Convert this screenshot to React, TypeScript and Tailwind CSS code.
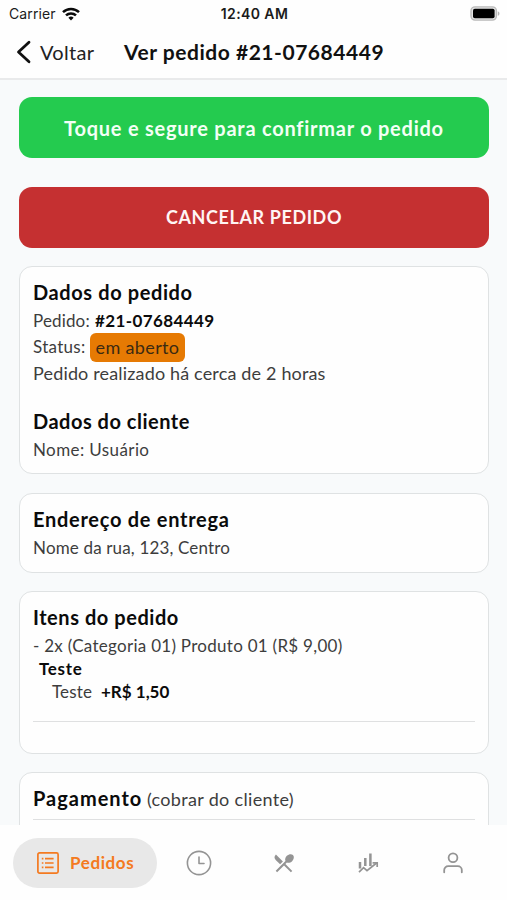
import type { ReactNode } from "react";
import { MdRestaurantMenu } from "react-icons/md";

function Card({ className = "", children }: { className?: string; children: ReactNode }) {
  return (
    <section className={`shrink-0 rounded-[13px] border border-[#dfe2e3] bg-[#fefefe] px-[13px] pt-[10px] ${className}`}>
      {children}
    </section>
  );
}

function Heading({ className = "", children }: { className?: string; children: ReactNode }) {
  return <h2 className={`h-[31px] text-[20px] leading-[30px] font-bold text-[#0b0b0b] ${className}`}>{children}</h2>;
}

function StatusBar() {
  return (
    <div className="grid h-[27px] grid-cols-3 items-center pr-[7px] pl-[9px] font-['Inter',sans-serif] text-[14px] text-[#1b1b1b]">
      <div className="flex items-center gap-[6px]">
        <span className="tracking-[0.1px]">Carrier</span>
        <svg width="18" height="14" viewBox="0 0 18 14" fill="none" stroke="#0a0a0a" strokeWidth="2.5">
          <path d="M1 5.2a11.4 11.4 0 0 1 16 0" />
          <path d="M4 8.4a7.2 7.2 0 0 1 10 0" />
          <path d="M6.4 10.7a3.8 3.8 0 0 1 5.2 0L9 13.4z" fill="#0a0a0a" stroke="none" />
        </svg>
      </div>
      <span className="text-center font-semibold tracking-[0.4px] whitespace-nowrap">12:40 AM</span>
      <svg className="justify-self-end" width="30" height="15" viewBox="0 0 30 15">
        <rect x="1" y="0.9" width="25.4" height="13.2" rx="4" fill="#e4e4e4" stroke="#b9b9b9" strokeWidth="1.4" />
        <rect x="3" y="2.7" width="21.6" height="9.6" rx="1.8" fill="#000" />
        <path d="M27.8 5.2c2.2.8 2.2 3.8 0 4.6z" fill="#b5b5b5" />
      </svg>
    </div>
  );
}

function OrdersIcon() {
  return (
    <svg width="22" height="22" viewBox="0 0 22 22" fill="none" stroke="#f47a20" strokeWidth="1.7">
      <rect x="0.9" y="0.9" width="20.2" height="20.2" rx="1.6" />
      <path d="M8 6.6h8.6M8 11h8.6M8 15.4h8.6M4.8 6.6h1.6M4.8 11h1.6M4.8 15.4h1.6" />
    </svg>
  );
}

function ClockIcon() {
  return (
    <svg width="26" height="26" viewBox="0 0 26 26" fill="none" stroke="#949494" strokeWidth="1.6" strokeLinecap="round" strokeLinejoin="round">
      <circle cx="13" cy="13" r="11.6" />
      <path d="M13 7V13.5h5" />
    </svg>
  );
}

function ChartIcon() {
  return (
    <svg width="22" height="23" viewBox="0 0 22 23" fill="none" stroke="#949494" strokeWidth="1.7">
      <path d="M3 11v6.6M8.3 7v8M13.4 2.5v12.5" strokeWidth="2.5" />
      <path d="M2 21.2l4.6-4.6 3.4 3 9.6-7.6" />
      <path d="M15.6 11.9h4.6v4" />
    </svg>
  );
}

function UserIcon() {
  return (
    <svg width="20" height="22" viewBox="0 0 20 22" fill="none" stroke="#949494" strokeWidth="1.8" strokeLinecap="round">
      <circle cx="10" cy="5.7" r="4.4" />
      <path d="M1.2 20.3v-2.2a4 4 0 0 1 4-4h9.6a4 4 0 0 1 4 4v2.2" />
    </svg>
  );
}

export default function App() {
  return (
    <div className="flex h-[900px] w-[507px] flex-col overflow-hidden bg-[#fefefe] font-['Lato',sans-serif] text-[17px] whitespace-nowrap text-[#3d3d3d]">
      <header className="h-20 shrink-0 border-b-2 border-[#e9eaeb]">
        <StatusBar />
        <div className="flex h-[49px] items-center pl-4 text-[20px] text-[#222]">
          <svg width="16" height="24" viewBox="0 0 16 24" fill="none" stroke="#111" strokeWidth="2.8" strokeLinecap="round" strokeLinejoin="round">
            <path d="M13 2.2L2.5 12 13 21.8" />
          </svg>
          <span className="ml-[8px] w-[84px] tracking-[0.33px]">Voltar</span>
          <h1 className="text-[21px] font-bold tracking-[0.53px] text-[#111]">Ver pedido #21-07684449</h1>
        </div>
      </header>

      <main className="flex min-h-0 flex-1 flex-col overflow-hidden bg-[#f8fafb] px-[19px] pt-[17px]">
        <button className="h-[61px] w-[470px] shrink-0 rounded-[13px] bg-[#24cb4f] pt-px text-[20px] font-bold tracking-[0.76px] text-[#f3fff5]">
          Toque e segure para confirmar o pedido
        </button>
        <button className="mt-[29px] h-[61px] w-[470px] shrink-0 rounded-[13px] bg-[#c53031] text-[18px] font-bold tracking-[0.6px] text-[#fff5f4]">
          CANCELAR PEDIDO
        </button>

        <Card className="mt-[18px] h-[208px] w-[470px]">
          <Heading className="tracking-[0.6px]">Dados do pedido</Heading>
          <div className="flex h-[26px] items-center">
            <span className="w-[62px] tracking-[0.15px]">Pedido:</span>
            <b className="tracking-[0.4px] text-[#0b0b0b]">#21-07684449</b>
          </div>
          <div className="flex h-[26px] items-center">
            <span className="w-[57px] tracking-[0.3px]">Status:</span>
            <span className="flex h-[29px] w-[95px] items-center justify-center rounded-[6px] bg-[#e67a03] text-[18px] tracking-[0.35px] text-[#3b2a12]">
              em aberto
            </span>
          </div>
          <p className="h-[26px] text-[18px] leading-[26px] tracking-[0.16px]">Pedido realizado há cerca de 2 horas</p>
          <Heading className="mt-5 tracking-[0.5px]">Dados do cliente</Heading>
          <p className="leading-[26px] tracking-[0.4px]">Nome: Usuário</p>
        </Card>

        <Card className="mt-[19px] h-[80px] w-[470px]">
          <Heading className="tracking-[0.72px]">Endereço de entrega</Heading>
          <p className="leading-[26px] tracking-[0.16px]">Nome da rua, 123, Centro</p>
        </Card>

        <Card className="mt-[18px] h-[163px] w-[470px]">
          <Heading className="tracking-[0.55px]">Itens do pedido</Heading>
          <p className="h-6 leading-[26px] tracking-[0.28px]">- 2x (Categoria 01) Produto 01 (R$ 9,00)</p>
          <p className="h-[23px] pl-[6px] leading-[23px] font-bold tracking-[0.69px] text-[#0b0b0b]">Teste</p>
          <p className="flex h-[23px] pl-[19px] leading-[23px]">
            <span className="w-[49px] tracking-[0.15px]">Teste</span>
            <b className="text-[#0b0b0b]">+R$ 1,50</b>
          </p>
          <hr className="mt-[18px] border-[#dfe0e1]" />
        </Card>

        <Card className="mt-[18px] h-[160px] w-[470px]">
          <div className="flex items-baseline">
            <Heading className="w-[114px] tracking-[1px]">Pagamento</Heading>
            <span className="text-[18px] tracking-[0.32px]">(cobrar do cliente)</span>
          </div>
          <hr className="mt-[5px] border-[#dfe0e1]" />
        </Card>
      </main>

      <nav className="flex h-[75px] shrink-0 items-center pl-[13px]">
        <div className="flex h-[50px] w-[144px] items-center gap-[11px] rounded-full bg-[#e8e8e8] pl-[24px] text-[#f47a20]">
          <OrdersIcon />
          <span className="font-bold tracking-[0.6px]">Pedidos</span>
        </div>
        <div className="flex flex-1 items-center">
          <div className="flex w-[84px] justify-center"><ClockIcon /></div>
          <div className="flex w-[85px] justify-center"><MdRestaurantMenu size={24} color="#949494" /></div>
          <div className="flex w-[84px] justify-center"><ChartIcon /></div>
          <div className="flex w-[85px] justify-center"><UserIcon /></div>
        </div>
      </nav>
    </div>
  );
}
